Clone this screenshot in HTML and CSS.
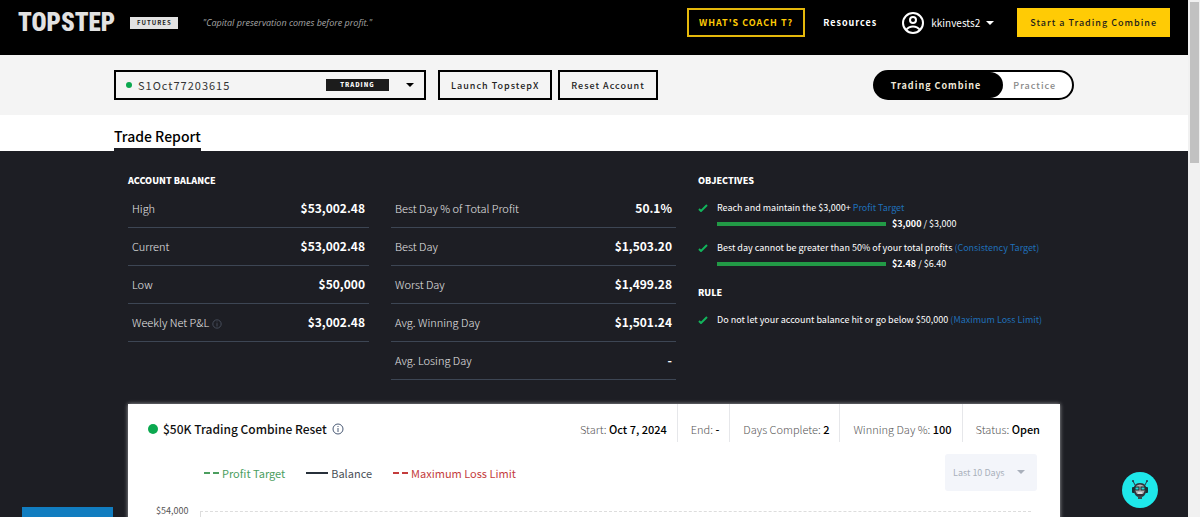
FILE: index.html
```html
<!DOCTYPE html>
<html lang="en">

<head>
    <meta charset="UTF-8">
    <meta name="viewport" content="width=device-width, initial-scale=1.0">
    <title>Topstep - Trade Report</title>
    <link rel="stylesheet" href="styles.css">
</head>

<body>
    <div class="page">
        <header class="header">
            <a class="logo" href="#">TOPSTEP</a>
            <span class="product">FUTURES</span>
            <em class="quote">"Capital preservation comes before profit."</em>
            <nav class="nav">
                <button class="btn btn-outline-gold">WHAT'S COACH T?</button>
                <a class="nav-link" href="#">Resources</a>
                <button class="user">
                    <svg width="24" height="24" viewBox="0 0 24 24" fill="none" stroke="#fff" stroke-width="2">
                        <circle cx="12" cy="12" r="10" />
                        <circle cx="12" cy="9" r="3" />
                        <path d="M5 19c2-2.600 4.300-3.500 7-3.500s5 .9 7 3.500" />
                    </svg>
                    <span>kkinvests2</span>
                    <svg class="caret" width="8" height="4" viewBox="0 0 8 4"><path d="M0 0h8L4 4z" /></svg>
                </button>
                <button class="btn btn-gold">Start a Trading Combine</button>
            </nav>
        </header>

        <div class="toolbar">
            <div class="container toolbar-row">
                <div class="account">
                    <span class="dot"></span>
                    <select aria-label="Account">
                        <option>S1Oct77203615</option>
                    </select>
                    <span class="account-tag">TRADING</span>
                    <svg class="caret" width="8" height="4" viewBox="0 0 8 4"><path d="M0 0h8L4 4z" /></svg>
                </div>
                <button class="btn btn-outline">Launch TopstepX</button>
                <button class="btn btn-outline">Reset Account</button>
                <div class="toggle">
                    <button class="toggle-item active">Trading Combine</button>
                    <button class="toggle-item">Practice</button>
                </div>
            </div>
        </div>

        <div class="tabs">
            <div class="container">
                <a class="tab" href="#">Trade Report</a>
            </div>
        </div>

        <main class="report">
            <div class="container report-body">
                <div class="stats">
                    <section>
                        <h2 class="heading">ACCOUNT BALANCE</h2>
                        <table class="stat-table">
                            <tr><th scope="row">High</th><td>$53,002.48</td></tr>
                            <tr><th scope="row">Current</th><td>$53,002.48</td></tr>
                            <tr><th scope="row">Low</th><td>$50,000</td></tr>
                            <tr>
                                <th scope="row">Weekly Net P&amp;L
                                    <svg class="info info-dim" width="10" height="10" viewBox="0 0 12 12">
                                        <circle cx="6" cy="6" r="5" />
                                        <path d="M6 5v4M6 3v1" />
                                    </svg>
                                </th>
                                <td>$3,002.48</td>
                            </tr>
                        </table>
                    </section>
                    <section class="no-heading">
                        <table class="stat-table">
                            <tr><th scope="row">Best Day % of Total Profit</th><td>50.1%</td></tr>
                            <tr><th scope="row">Best Day</th><td>$1,503.20</td></tr>
                            <tr><th scope="row">Worst Day</th><td>$1,499.28</td></tr>
                            <tr><th scope="row">Avg. Winning Day</th><td>$1,501.24</td></tr>
                            <tr><th scope="row">Avg. Losing Day</th><td>-</td></tr>
                        </table>
                    </section>
                    <section>
                        <h2 class="heading">OBJECTIVES</h2>
                        <ul class="goals">
                            <li class="goal">
                                <svg class="check" width="10" height="8" viewBox="0 0 10 8"><path d="M1 5l2 2 6-6" /></svg>
                                <p>Reach and maintain the $3,000+ <a href="#">Profit Target</a></p>
                                <div class="progress">
                                    <div class="bar"></div>
                                    <span><b>$3,000</b> / $3,000</span>
                                </div>
                            </li>
                            <li class="goal">
                                <svg class="check" width="10" height="8" viewBox="0 0 10 8"><path d="M1 5l2 2 6-6" /></svg>
                                <p>Best day cannot be greater than 50% of your total profits <a href="#">(Consistency Target)</a></p>
                                <div class="progress">
                                    <div class="bar"></div>
                                    <span><b>$2.48</b> / $6.40</span>
                                </div>
                            </li>
                        </ul>
                        <h2 class="heading">RULE</h2>
                        <ul class="goals">
                            <li class="goal">
                                <svg class="check" width="10" height="8" viewBox="0 0 10 8"><path d="M1 5l2 2 6-6" /></svg>
                                <p>Do not let your account balance hit or go below $50,000 <a href="#">(Maximum Loss Limit)</a></p>
                            </li>
                        </ul>
                    </section>
                </div>

                <section class="card">
                    <div class="card-header">
                        <h3 class="card-title">
                            <span class="dot dot-large"></span>
                            $50K Trading Combine Reset
                            <svg class="info" width="12" height="12" viewBox="0 0 12 12">
                                <circle cx="6" cy="6" r="5" />
                                <path d="M6 5v4M6 3v1" />
                            </svg>
                        </h3>
                        <ul class="facts">
                            <li>Start: <b>Oct 7, 2024</b></li>
                            <li>End: <b>-</b></li>
                            <li>Days Complete: <b>2</b></li>
                            <li>Winning Day %: <b>100</b></li>
                            <li>Status: <b>Open</b></li>
                        </ul>
                    </div>
                    <div class="chart-bar">
                        <ul class="legend">
                            <li class="target">Profit Target</li>
                            <li class="balance">Balance</li>
                            <li class="loss">Maximum Loss Limit</li>
                        </ul>
                        <div class="range">
                            <select aria-label="Date range">
                                <option>Last 10 Days</option>
                            </select>
                            <svg class="caret" width="8" height="4" viewBox="0 0 8 4"><path d="M0 0h8L4 4z" /></svg>
                        </div>
                    </div>
                    <div class="chart">
                        <span class="axis-label">$54,000</span>
                        <div class="plot"></div>
                    </div>
                </section>
            </div>
        </main>

        <div class="help-tab"></div>
        <button class="chat" aria-label="Coach T">
            <svg width="18" height="20" viewBox="0 0 18 20">
                <path d="M4 5L2 1M14 5l2-4" stroke="#26384a" />
                <circle cx="2" cy="1" r="1" fill="#26384a" />
                <circle cx="16" cy="1" r="1" fill="#26384a" />
                <rect x="1" y="7" width="3" height="6" rx="1" fill="#173036" />
                <rect x="14" y="7" width="3" height="6" rx="1" fill="#173036" />
                <path d="M3 7q1-4 6-4t6 4v5q-1 4-4 5H7q-3-1-4-5z" fill="#30343d" />
                <path d="M5 6q4-3 8 0l1 4-2 4H6l-2-4z" fill="#aeb2b4" />
                <rect x="4" y="7" width="4" height="3" fill="#21d6d6" stroke="#1c2429" />
                <rect x="10" y="7" width="4" height="3" fill="#21d6d6" stroke="#1c2429" />
                <path d="M7 13h4" stroke="#fff" />
                <path d="M7 16h4v3H7z" fill="#3a4b50" />
            </svg>
        </button>
    </div>
    <div class="scrollbar">
        <div class="scroll-thumb"></div>
    </div>
</body>

</html>
```
FILE: styles.css
```css
* {
    box-sizing: border-box;
}

body {
    margin: 0;
    height: 100vh;
    display: flex;
    overflow: hidden;
    position: relative;
    font-family: 'Noto Sans CJK SC', 'Open Sans', sans-serif;
    font-size: 12px;
    line-height: 16px;
    color: #000;
}

button,
select {
    font-family: inherit;
    color: inherit;
    background: none;
    border: none;
    padding: 0;
    cursor: pointer;
}

select {
    appearance: none;
}

ul {
    list-style: none;
    margin: 0;
    padding: 0;
}

a {
    text-decoration: none;
}

.page {
    flex: 1;
    min-width: 0;
    display: flex;
    flex-direction: column;
}

.container {
    width: 100%;
    max-width: 960px;
    margin: 0 auto;
}

.caret {
    fill: currentColor;
    flex-shrink: 0;
}

/* Header */
.header {
    display: flex;
    align-items: center;
    background-color: #000;
    padding: 8px 18px 18px;
}

.logo {
    font-family: 'Roboto Condensed', 'Open Sans Condensed', Roboto, sans-serif;
    font-size: 25px;
    font-weight: 900;
    line-height: 29px;
    color: #e2e2e2;
    width: 97px;
}

.product {
    background-color: #e2e2e2;
    color: #222;
    font-size: 6px;
    font-weight: bold;
    letter-spacing: 1px;
    line-height: 12px;
    padding: 0 6px 0 7px;
    margin-left: 15px;
}

.quote {
    font-family: 'Open Sans', sans-serif;
    color: #a5a5a5;
    font-size: 9px;
    margin-left: 25px;
}

.nav {
    display: flex;
    align-items: center;
    margin-left: auto;
    color: #fff;
}

.btn {
    height: 29px;
    font-size: 9px;
    font-weight: 500;
    letter-spacing: 1px;
    padding: 0 11px;
    white-space: nowrap;
}

.btn-outline-gold {
    border: 2px solid #e5b80b;
    color: #ffcb05;
    font-weight: bold;
    padding: 0 10px;
}

.btn-gold {
    background-color: #ffcb05;
    color: #1c1c1c;
    padding: 0 13px;
}

.nav-link {
    color: #fff;
    font-size: 9px;
    font-weight: bold;
    letter-spacing: 1px;
    margin: 0 24px 0 18px;
}

.user {
    display: flex;
    align-items: center;
    font-size: 10px;
    gap: 6px;
    margin-right: 23px;
}

/* Account toolbar */
.toolbar {
    background-color: #f4f4f4;
    padding: 15px 0;
}

.toolbar-row {
    display: flex;
    align-items: center;
}

.account {
    display: flex;
    align-items: center;
    width: 312px;
    height: 30px;
    border: 2px solid #000;
    padding: 0 10px;
    margin-right: 12px;
}

.account select {
    flex: 1;
    font-size: 11px;
    color: #333;
    letter-spacing: 1px;
    margin-left: 6px;
}

.dot {
    width: 6px;
    height: 6px;
    border-radius: 50%;
    background-color: #0ba84f;
}

.dot-large {
    width: 10px;
    height: 10px;
}

.account-tag {
    background-color: #1c1c1c;
    color: #fff;
    font-size: 6px;
    font-weight: 900;
    letter-spacing: 1px;
    line-height: 12px;
    text-align: center;
    width: 63px;
    margin-right: 17px;
}

.btn-outline {
    height: 30px;
    border: 2px solid #000;
    color: #222;
    margin-right: 6px;
}

.toggle {
    display: flex;
    height: 30px;
    margin-left: auto;
    border: 2px solid #000;
    border-radius: 15px;
    background: linear-gradient(to right, #000 50%, #fff 50%);
    overflow: hidden;
}

.toggle-item {
    font-size: 9px;
    font-weight: 500;
    letter-spacing: 1px;
    color: #888;
    padding: 0 16px 0 10px;
}

.toggle-item.active {
    background-color: #000;
    color: #f0e9d8;
    font-weight: bold;
    padding: 0 22px 0 16px;
    border-radius: 0 15px 15px 0;
}

/* Tabs */
.tabs {
    background-color: #fff;
    padding-top: 10px;
}

.tab {
    display: inline-block;
    color: #000;
    font-size: 14px;
    font-weight: 500;
    line-height: 23px;
    border-bottom: 3px solid #1d1e24;
    vertical-align: top;
}

/* Report */
.report {
    flex: 1;
    min-height: 0;
    overflow: hidden;
    background-color: #1d1e24;
    color: #fff;
}

.report-body {
    padding: 22px 14px 0;
}

.stats {
    display: grid;
    grid-template-columns: 241fr 285fr 362fr;
    gap: 22px;
}

.heading {
    font-size: 9px;
    font-weight: 900;
    line-height: 16px;
    margin: 0;
}

.no-heading {
    padding-top: 16px;
}

.stat-table {
    width: 100%;
    border-collapse: collapse;
}

.stat-table th,
.stat-table td {
    height: 38px;
    border-bottom: 1px solid #3d4654;
    padding: 0 4px;
}

.stat-table th {
    font-size: 11px;
    font-weight: 300;
    text-align: left;
    color: #e8e8e8;
}

.stat-table td {
    font-size: 12px;
    font-weight: bold;
    text-align: right;
}

.info {
    fill: none;
    stroke: #4a5a75;
    vertical-align: middle;
}

.info-dim {
    stroke: #4d5564;
}

.goals {
    padding: 11px 0 5px;
}

.goal {
    display: grid;
    grid-template-columns: 10px 1fr;
    column-gap: 9px;
    align-items: center;
    font-size: 9px;
    margin-bottom: 8px;
}

.goal p {
    margin: 0;
    white-space: nowrap;
}

.goal a {
    color: #1f6fb8;
}

.check {
    fill: none;
    stroke: #12b45c;
    stroke-width: 2;
}

.progress {
    grid-column: 2;
    display: flex;
    align-items: center;
    gap: 6px;
}

.bar {
    width: 169px;
    height: 4px;
    background-color: #229a46;
}

/* Chart card */
.card {
    background-color: #fff;
    color: #111;
    height: 400px;
    margin-top: 24px;
    box-shadow: 0 0 4px rgba(255, 255, 255, 0.6);
}

.card-header {
    display: flex;
    justify-content: space-between;
    padding: 0 20px;
}

.card-title {
    display: flex;
    align-items: center;
    gap: 5px;
    font-size: 12px;
    font-weight: 500;
    line-height: 16px;
    margin: 12px 0 0;
}

.facts {
    display: flex;
    font-size: 11px;
    font-weight: 300;
    color: #555;
}

.facts li {
    padding: 17px 10px 5px 13px;
    border-right: 1px solid #e6e7ea;
}

.facts li:last-child {
    padding-right: 0;
    border-right: none;
}

.facts b {
    font-weight: 500;
    color: #000;
}

.chart-bar {
    display: flex;
    align-items: center;
    justify-content: space-between;
    padding: 12px 23px 0 76px;
}

.legend {
    display: flex;
    gap: 21px;
    font-size: 11px;
    padding-top: 2px;
}

.legend li {
    display: flex;
    align-items: center;
    gap: 3px;
}

.legend li::before {
    content: '';
    width: 15px;
    border-top: 2px solid;
}

.legend .target {
    color: #4b9e5f;
}

.legend .loss {
    color: #c43c3c;
}

.legend .target::before,
.legend .loss::before {
    height: 2px;
    border: none;
    background: linear-gradient(to right, currentColor 6px, transparent 6px, transparent 9px, currentColor 9px);
}

.legend .balance {
    color: #4a4f57;
}

.legend .balance::before {
    width: 22px;
    border-color: #27303a;
}

.range {
    display: flex;
    align-items: center;
    justify-content: space-between;
    width: 92px;
    height: 37px;
    padding: 0 12px 0 8px;
    background-color: #f3f5fa;
    border-radius: 3px;
    color: #a9b0bb;
}

.range select {
    font-size: 9px;
}

.chart {
    display: flex;
    padding: 12px 29px 0 28px;
    gap: 12px;
}

.axis-label {
    font-size: 9px;
    color: #555;
}

.plot {
    flex: 1;
    height: 240px;
    margin-top: 8px;
    border-top: 1px dashed #ddd;
    border-left: 1px solid #ddd;
}

/* Floating items over the page */
.help-tab {
    position: absolute;
    left: 22px;
    bottom: 0;
    width: 91px;
    height: 10px;
    background-color: #117dc0;
}

.chat {
    position: absolute;
    right: 42px;
    bottom: 9px;
    display: flex;
    align-items: center;
    justify-content: center;
    width: 36px;
    height: 36px;
    border-radius: 50%;
    background-color: #1ee8ea;
}

.scrollbar {
    width: 12px;
    background-color: #f1f1f1;
    padding: 2px 1px 0 2px;
}

.scroll-thumb {
    height: 161px;
    background-color: #c1c1c1;
}
```
